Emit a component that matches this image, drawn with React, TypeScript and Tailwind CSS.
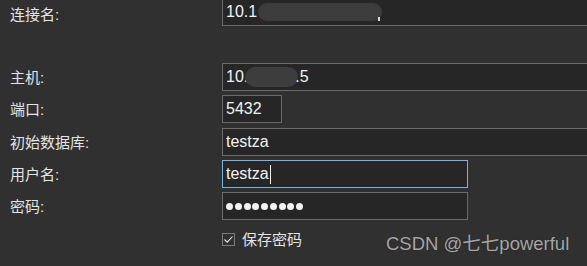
const labelCls =
  "w-[222px] shrink-0 pl-[10px] text-[15px] text-[#e4e4e4] leading-none"

function Field({
  wide = true,
  width,
  focused = false,
  children,
}: {
  wide?: boolean
  width?: string
  focused?: boolean
  children?: React.ReactNode
}) {
  return (
    <div
      className={
        "flex h-[28px] shrink-0 items-center overflow-hidden bg-[#262626] pl-[3px] text-[16px] leading-none text-[#f2f2f2] border " +
        (focused ? "border-[#7ab4e0] " : "border-[#6a6a6a] ") +
        (wide ? "w-[400px]" : width ?? "")
      }
    >
      {children}
    </div>
  )
}

function Row({
  label,
  className,
  labelOffset,
  children,
}: {
  label: string
  className?: string
  labelOffset?: string
  children: React.ReactNode
}) {
  return (
    <div className={"flex items-center " + (className ?? "")}>
      <div className={labelCls + " " + (labelOffset ?? "")}>{label}</div>
      {children}
    </div>
  )
}

export default function App() {
  return (
    <div
      className="relative h-[266px] w-[587px] overflow-hidden bg-[#303030]"
      style={{ fontFamily: '"Liberation Sans", "Noto Sans CJK SC", sans-serif' }}
    >
      <div className="flex flex-col">
        <Row label="连接名:" className="mt-[-2px]" labelOffset="pt-[5px]">
          <Field>
            <span>10.1</span>
            <span className="ml-[1px] h-[18px] w-[124px] rounded-full bg-[#3c3c3c]" />
            <span className="ml-[-4px] mt-[14px] h-[4px] w-[2px] bg-[#d8d8d8]" />
          </Field>
        </Row>

        <Row label="主机:" className="mt-[37px]">
          <Field>
            <span>10.</span>
            <span className="ml-[-3px] h-[20px] w-[53px] rounded-full bg-[#3d3d3d]" />
            <span className="ml-[-3px]">.5</span>
          </Field>
        </Row>

        <Row label="端口:" className="mt-[4px]">
          <Field wide={false} width="w-[60px]">
            <span>5432</span>
          </Field>
        </Row>

        <Row label="初始数据库:" className="mt-[5px]">
          <Field>
            <span>testza</span>
          </Field>
        </Row>

        <Row label="用户名:" className="mt-[4px]">
          <Field wide={false} width="w-[246px]" focused>
            <span>testza</span>
            <span className="ml-[1px] h-[19px] w-[1px] bg-[#f2f2f2]" />
          </Field>
        </Row>

        <Row label="密码:" className="mt-[4px]">
          <Field wide={false} width="w-[246px]">
            <div className="flex items-center gap-[1.75px]">
              {Array.from({ length: 9 }).map((_, i) => (
                <span key={i} className="h-[7px] w-[7px] rounded-full bg-[#f2f2f2]" />
              ))}
            </div>
          </Field>
        </Row>

        <div className="mt-[12px] flex items-center pl-[222px]">
          <span className="flex h-[13px] w-[13px] items-center justify-center border border-[#7a7a7a]">
            <svg width="11" height="11" viewBox="0 0 11 11" fill="none">
              <path d="M1.5 5.5 L4.2 8.2 L9.5 2.5" stroke="#e6e6e6" strokeWidth="1.1" />
            </svg>
          </span>
          <span className="ml-[7px] text-[15px] leading-none text-[#e4e4e4]">保存密码</span>
        </div>
      </div>

      <div className="absolute left-[386px] top-[235px] text-[18.5px] leading-none text-[#a6a6a6] [text-shadow:0_0_1px_#1a1a1a]">
        CSDN @七七powerful
      </div>
    </div>
  )
}
